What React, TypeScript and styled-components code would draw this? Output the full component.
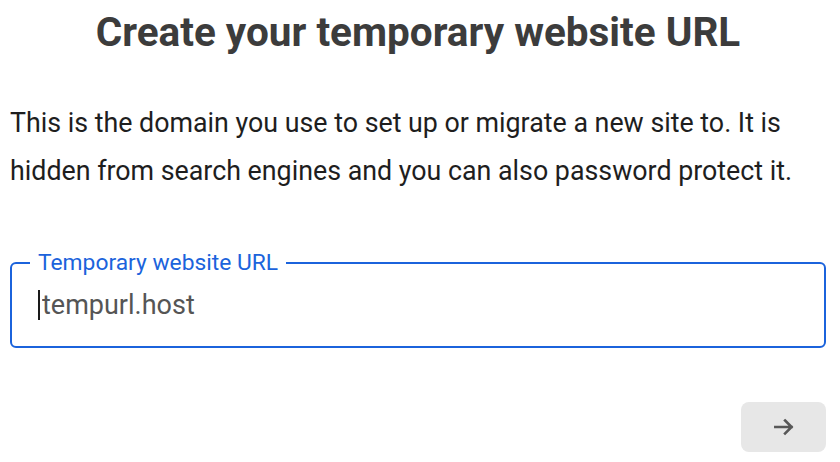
import { createGlobalStyle } from 'styled-components'
import styled from 'styled-components'

const GlobalStyle = createGlobalStyle`
  html, body {
    margin: 0;
    padding: 0;
    background: #ffffff;
  }
  body {
    font-family: Roboto, 'Liberation Sans', Arial, sans-serif;
  }
`

const Page = styled.main`
  width: 840px;
  height: 462px;
  box-sizing: border-box;
  padding: 8px 14px 0 10px;
  display: flex;
  flex-direction: column;
`

const Title = styled.h1`
  margin: 0;
  text-align: center;
  font-size: 40.5px;
  line-height: 48px;
  font-weight: 700;
  color: #3c3c3c;
`

const Intro = styled.p`
  margin: 43px 0 0;
  font-size: 26.8px;
  line-height: 48px;
  color: #1e1e1e;
`

const Field = styled.fieldset`
  margin: 56px 0 0;
  padding: 0 18px;
  height: 97px;
  box-sizing: border-box;
  border: 2px solid #1b63dc;
  border-radius: 6px;
`

const Label = styled.legend`
  padding: 0 8px;
  font-size: 22.8px;
  line-height: 24px;
  color: #1b63dc;
`

const InputWrap = styled.div`
  position: relative;
  margin-top: 14px;
`

const Input = styled.input`
  display: block;
  width: 100%;
  box-sizing: border-box;
  margin: 0;
  padding: 0 0 0 12px;
  border: none;
  outline: none;
  font-family: Roboto, 'Liberation Sans', Arial, sans-serif;
  font-size: 27px;
  line-height: 32px;
  height: 32px;
  color: #555555;
  background: transparent;
  &::placeholder {
    color: #555555;
    opacity: 1;
  }
`

const Caret = styled.span`
  position: absolute;
  left: 8px;
  top: 1px;
  width: 2px;
  height: 30px;
  background: #1a1a1a;
`

const Footer = styled.div`
  display: flex;
  justify-content: flex-end;
  margin-top: 54px;
`

const NextButton = styled.button`
  width: 85px;
  height: 50px;
  border: none;
  border-radius: 8px;
  background: #e7e7e7;
  display: flex;
  align-items: center;
  justify-content: center;
  color: #585858;
  cursor: pointer;
`

export default function App() {
  return (
    <>
      <GlobalStyle />
      <Page>
        <Title>Create your temporary website URL</Title>
        <Intro>
          This is the domain you use to set up or migrate a new site to. It is
          hidden from search engines and you can also password protect it.
        </Intro>
        <Field>
          <Label>Temporary website URL</Label>
          <InputWrap>
            <Caret />
            <Input placeholder="tempurl.host" />
          </InputWrap>
        </Field>
        <Footer>
          <NextButton aria-label="Next">
            <svg width="26" height="26" viewBox="0 0 24 24" fill="none">
              <path
                d="M4 12h15M13 6l6 6-6 6"
                stroke="currentColor"
                strokeWidth="2.4"
                strokeLinecap="square"
              />
            </svg>
          </NextButton>
        </Footer>
      </Page>
    </>
  )
}
